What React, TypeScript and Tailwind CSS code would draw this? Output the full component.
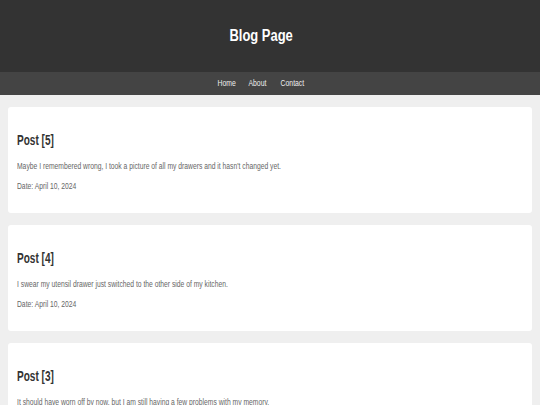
import React from 'react';

const posts = [
  { id: 5, body: "Maybe I remembered wrong, I took a picture of all my drawers and it hasn't changed yet.", date: 'April 10, 2024' },
  { id: 4, body: 'I swear my utensil drawer just switched to the other side of my kitchen.', date: 'April 10, 2024' },
  { id: 3, body: 'It should have worn off by now, but I am still having a few problems with my memory.', date: 'April 10, 2024' },
];

export default function App() {
  return (
    <div className="min-h-screen bg-[#efefef] font-['Liberation_Sans',Arial,sans-serif]">
      <header className="h-[72px] bg-[#333333] flex items-center justify-center pr-[17px]">
        <h1 className="inline-block scale-x-[0.81] text-[16px] leading-[20px] font-bold text-white whitespace-nowrap">Blog Page</h1>
      </header>
      <nav className="h-[23px] bg-[#444444] flex items-center justify-center gap-[6px] pr-[17px] text-[9.5px] text-[#eeeeee]">
        <a href="#" className="inline-block scale-x-[0.72]">Home</a>
        <a href="#" className="inline-block scale-x-[0.72]">About</a>
        <a href="#" className="inline-block scale-x-[0.72]">Contact</a>
      </nav>
      <main className="px-[8px] pt-[12px] flex flex-col gap-[12px]">
        {posts.map((post) => (
          <article key={post.id} className="h-[106px] bg-white rounded-[3px] px-[9px] pt-[23px]">
            <h2 className="origin-left scale-x-[0.67] text-[15px] leading-[20px] font-bold text-[#333333] whitespace-nowrap">Post [{post.id}]</h2>
            <p className="origin-left scale-x-[0.75] mt-[9.5px] text-[9px] leading-[12px] text-[#666666] whitespace-nowrap">{post.body}</p>
            <p className="origin-left scale-x-[0.75] mt-[8px] text-[9px] leading-[12px] text-[#666666] whitespace-nowrap">Date: {post.date}</p>
          </article>
        ))}
      </main>
    </div>
  );
}
